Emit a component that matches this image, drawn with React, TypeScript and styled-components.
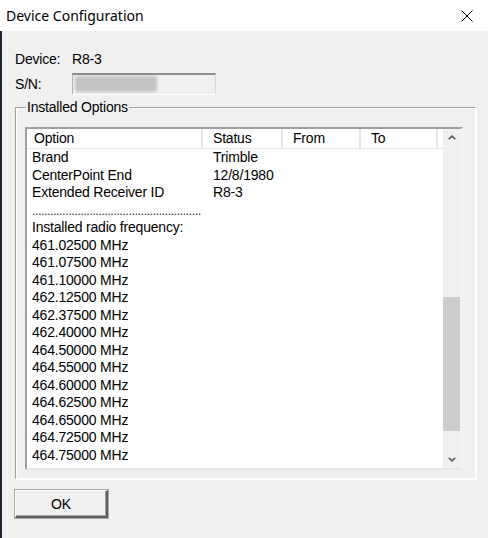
import { createGlobalStyle, styled } from 'styled-components';

const GlobalStyle = createGlobalStyle`
  html, body {
    margin: 0;
    padding: 0;
    background: #f0f0f0;
  }
`;

const options = [
  { name: 'Brand', status: 'Trimble' },
  { name: 'CenterPoint End', status: '12/8/1980' },
  { name: 'Extended Receiver ID', status: 'R8-3' },
];

const frequencies = [
  '461.02500', '461.07500', '461.10000', '462.12500', '462.37500',
  '462.40000', '464.50000', '464.55000', '464.60000', '464.62500',
  '464.65000', '464.72500', '464.75000',
];

export default function App() {
  return (
    <>
      <GlobalStyle />
      <Window>
        <TitleBar>
          <Title>Device Configuration</Title>
          <CloseButton aria-label="Close">
            <svg width="12" height="12" viewBox="0 0 12 12">
              <path d="M0.5 0.5 L11.5 11.5 M11.5 0.5 L0.5 11.5" stroke="#000" strokeWidth="1" fill="none" />
            </svg>
          </CloseButton>
        </TitleBar>
        <Body>
          <InfoRow>
            <Label>Device:</Label>
            <span>R8-3</span>
          </InfoRow>
          <SerialRow>
            <Label>S/N:</Label>
            <SerialField>
              <Redacted />
            </SerialField>
          </SerialRow>
          <GroupBox>
            <legend>Installed Options</legend>
            <ListView>
              <ListContent>
                <HeaderRow>
                  <HeaderCell $pad={7}>Option</HeaderCell>
                  <HeaderCell>Status</HeaderCell>
                  <HeaderCell>From</HeaderCell>
                  <HeaderCell>To</HeaderCell>
                  <div />
                </HeaderRow>
                {options.map((o) => (
                  <Row key={o.name}>
                    <Cell $pad={5}>{o.name}</Cell>
                    <Cell>{o.status}</Cell>
                  </Row>
                ))}
                <Row>
                  <Dots>{'.'.repeat(56)}</Dots>
                </Row>
                <Row>
                  <Cell $pad={5} $wide>Installed radio frequency:</Cell>
                </Row>
                {frequencies.map((f) => (
                  <Row key={f}>
                    <Cell $pad={5}>{f} MHz</Cell>
                  </Row>
                ))}
              </ListContent>
              <ScrollBar>
                <ArrowButton>
                  <Chevron viewBox="0 0 8 5">
                    <path d="M0.8 4.2 L4 1.2 L7.2 4.2" />
                  </Chevron>
                </ArrowButton>
                <Track>
                  <Thumb />
                </Track>
                <ArrowButton>
                  <Chevron viewBox="0 0 8 5">
                    <path d="M0.8 0.8 L4 3.8 L7.2 0.8" />
                  </Chevron>
                </ArrowButton>
              </ScrollBar>
            </ListView>
          </GroupBox>
          <Footer>
            <OkButton>OK</OkButton>
          </Footer>
        </Body>
      </Window>
    </>
  );
}

const Window = styled.div`
  width: 488px;
  height: 538px;
  display: flex;
  flex-direction: column;
  background: #f0f0f0;
  font-family: 'Liberation Sans', Arial, sans-serif;
  font-size: 14px;
  letter-spacing: -0.2px;
  color: #000;
  overflow: hidden;
`;

const TitleBar = styled.div`
  height: 31px;
  flex: none;
  display: flex;
  align-items: center;
  justify-content: space-between;
  background: #fff;
  padding: 0 15px 0 6px;
  box-sizing: border-box;
  letter-spacing: 0;
`;

const Title = styled.span`
  font-family: 'Noto Sans', 'Open Sans', sans-serif;
  font-size: 14px;
  color: #000;
`;

const CloseButton = styled.div`
  display: grid;
  place-content: center;
  width: 12px;
  height: 12px;
`;

const Body = styled.div`
  flex: 1;
  display: flex;
  flex-direction: column;
  border-left: 2px solid #1e2431;
  padding: 20px 12px 0 13px;
`;

const InfoRow = styled.div`
  display: grid;
  grid-template-columns: 57px auto;
  align-items: center;
  height: 17px;
  line-height: 17px;
`;

const Label = styled.span`
  color: #000;
`;

const SerialRow = styled.div`
  display: grid;
  grid-template-columns: 57px 144px;
  align-items: center;
  margin-top: 5px;
  height: 22px;
`;

const SerialField = styled.div`
  height: 22px;
  box-sizing: border-box;
  border-top: 2px solid #8e8e8e;
  border-left: 1px solid #b4b4b4;
  border-right: 1px solid #d8d8d8;
  border-bottom: 1px solid #ffffff;
  background: #f0f0f0;
  overflow: hidden;
`;

const Redacted = styled.div`
  width: 82px;
  height: 16px;
  margin: 1px 0 0 2px;
  background: #c3c3c3;
  border-radius: 3px;
  filter: blur(1.5px);
`;

const GroupBox = styled.fieldset`
  margin: 5px 0 0 0;
  padding: 12px 12px 8px 9px;
  width: 461px;
  box-sizing: border-box;
  border: 1px solid;
  border-color: #a0a0a0 #ffffff #ffffff #a0a0a0;
  box-shadow: inset 1px 1px 0 #ffffff, 1px 1px 0 #ffffff;

  legend {
    padding: 0 1px;
    margin-left: 1px;
    line-height: 15px;
  }
`;

const ListView = styled.div`
  height: 343px;
  box-sizing: border-box;
  display: grid;
  grid-template-columns: 1fr 18px;
  background: #fff;
  border-top: 2px solid #a0a0a0;
  border-left: 2px solid #a0a0a0;
  border-right: 2px solid #f4f4f4;
  border-bottom: 2px solid #e6e6e6;
  overflow: hidden;
`;

const ListContent = styled.div`
  display: flex;
  flex-direction: column;
  overflow: hidden;
`;

const HeaderRow = styled.div`
  display: grid;
  grid-template-columns: 176px 80px 78px 77px 1fr;
  height: 20px;
  box-sizing: border-box;
  border-bottom: 1px solid #e5e5e5;
  background: #fff;
  flex: none;
`;

const HeaderCell = styled.div<{ $pad?: number }>`
  padding-left: ${(p) => p.$pad ?? 10}px;
  line-height: 19px;
  border-right: 2px solid #e5e5e5;
  white-space: nowrap;
`;

const Row = styled.div`
  display: grid;
  grid-template-columns: 176px 80px 1fr;
  height: 17.5px;
  line-height: 17.5px;
  flex: none;
`;

const Cell = styled.div<{ $pad?: number; $wide?: boolean }>`
  padding-left: ${(p) => p.$pad ?? 10}px;
  white-space: nowrap;
  ${(p) => (p.$wide ? 'grid-column: 1 / -1;' : '')}
`;

const Dots = styled.div`
  grid-column: 1 / -1;
  padding-left: 5px;
  font-size: 13px;
  letter-spacing: -0.6px;
  color: #333;
  white-space: nowrap;
`;

const ScrollBar = styled.div`
  display: flex;
  flex-direction: column;
  background: #f0f0f0;
`;

const ArrowButton = styled.div`
  height: 17px;
  flex: none;
  display: grid;
  place-content: center;
`;

const Chevron = styled.svg`
  width: 8px;
  height: 5px;
  fill: none;
  stroke: #606060;
  stroke-width: 1.8;
`;

const Track = styled.div`
  flex: 1;
  display: flex;
  flex-direction: column;
`;

const Thumb = styled.div`
  margin: 151px 1px 0 0;
  height: 134px;
  background: #cdcdcd;
`;

const Footer = styled.div`
  display: flex;
  padding-top: 11px;
`;

const OkButton = styled.button`
  width: 93px;
  height: 28px;
  padding: 0;
  font-family: 'Liberation Sans', Arial, sans-serif;
  font-size: 14px;
  letter-spacing: -0.2px;
  color: #000;
  background: #f0f0f0;
  border: none;
  border-top: 1px solid #ffffff;
  border-left: 1px solid #ffffff;
  border-right: 2px solid #5e5e5e;
  border-bottom: 2px solid #5e5e5e;
  box-shadow: inset -1px -1px 0 #a0a0a0, 0 0 0 1px #a8a8a8;
`;
